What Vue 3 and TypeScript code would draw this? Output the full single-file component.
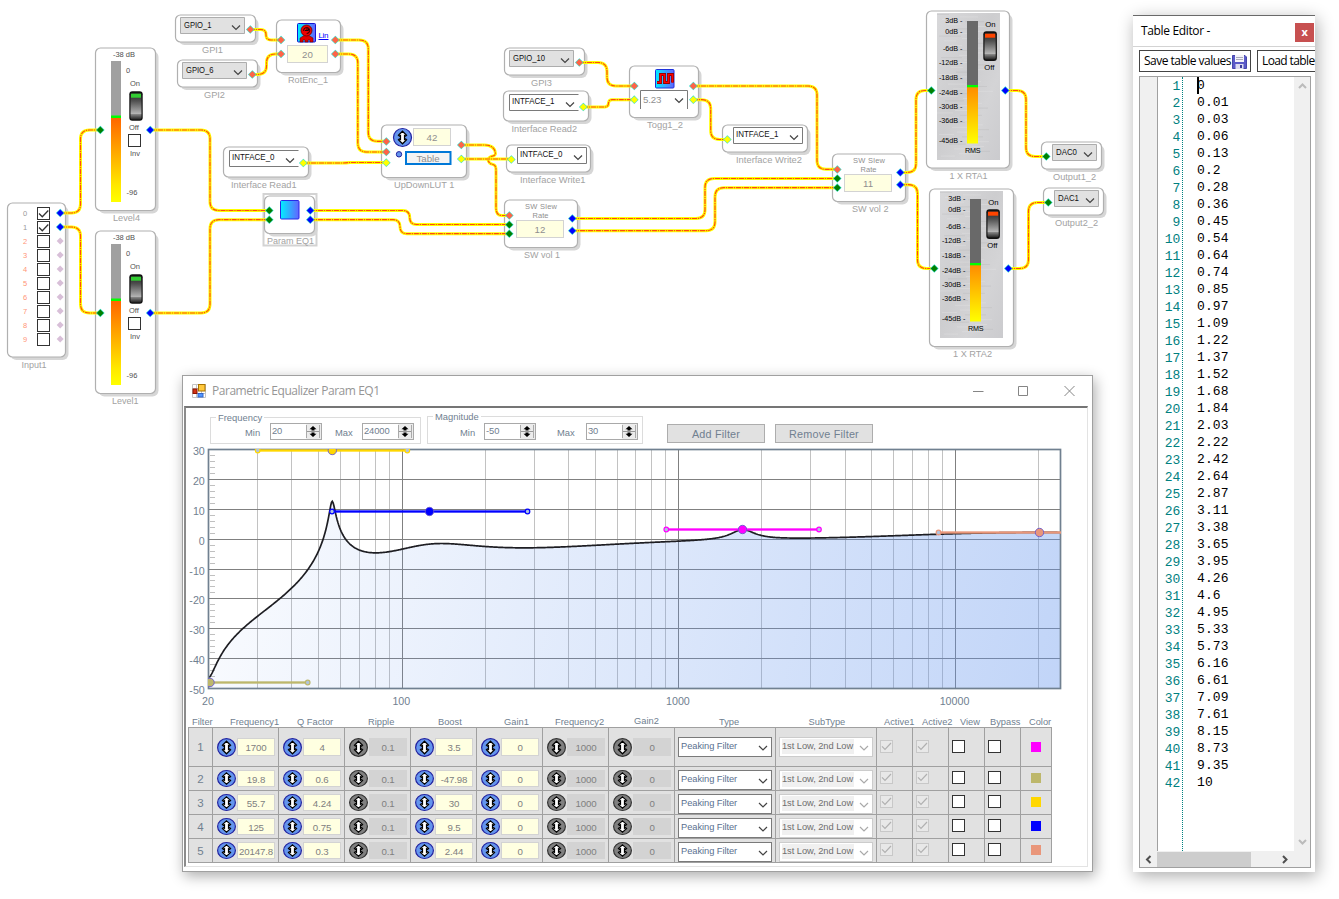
<script setup lang="ts">
type Pt = [number, number]
type Label = { x: number; y: number; t: string; w: number }
type Combo = { x: number; y: number; w: number; h: number; t: string; tw: number; grey?: boolean; open?: 'right' | 'bottom' }

const boxes: [number, number, number, number][] = [
  [95.5, 48, 60, 162.5], [95.5, 231, 60, 162.5], [7.5, 203, 58, 154],
  [175.5, 15, 80, 27], [177.5, 60, 80, 27], [276.5, 20, 64, 52.5],
  [223.5, 147, 85, 30], [264.5, 196, 50, 37.5], [381.5, 125, 85, 52.5],
  [504.5, 48, 80, 27], [503.5, 91, 85, 30], [506.5, 145, 84, 27],
  [504.5, 200, 73, 47.5], [629.5, 66, 69, 51.5], [722.5, 125, 85, 27],
  [832.5, 154, 73, 47.5], [926.5, 11, 83, 157], [929.5, 189, 84, 157.5],
  [1041.5, 142, 60, 27], [1043.5, 188, 60, 27],
]

const names: Label[] = [
  { x: 202, y: 53, t: 'GPI1', w: 21 }, { x: 204, y: 98, t: 'GPI2', w: 21 },
  { x: 288, y: 83, t: 'RotEnc_1', w: 40 }, { x: 231, y: 188, t: 'Interface Read1', w: 65.5 },
  { x: 113, y: 221, t: 'Level4', w: 27 }, { x: 21.5, y: 368, t: 'Input1', w: 25 },
  { x: 112, y: 404, t: 'Level1', w: 26.5 }, { x: 267, y: 244, t: 'Param EQ1', w: 47 },
  { x: 394, y: 188, t: 'UpDownLUT 1', w: 60.5 }, { x: 531, y: 86, t: 'GPI3', w: 21 },
  { x: 511.5, y: 132, t: 'Interface Read2', w: 65.5 }, { x: 520, y: 183, t: 'Interface Write1', w: 65.5 },
  { x: 524, y: 258, t: 'SW vol 1', w: 36 }, { x: 647, y: 128, t: 'Togg1_2', w: 36 },
  { x: 736, y: 163, t: 'Interface Write2', w: 66 }, { x: 852, y: 212, t: 'SW vol 2', w: 36.5 },
  { x: 949.5, y: 179, t: '1 X RTA1', w: 38 }, { x: 953, y: 357, t: '1 X RTA2', w: 39 },
  { x: 1053, y: 180, t: 'Output1_2', w: 43 }, { x: 1055, y: 226, t: 'Output2_2', w: 43 },
]

const combos: Combo[] = [
  { x: 180.5, y: 17.5, w: 64, h: 16, t: 'GPIO_1', tw: 27.5, grey: true },
  { x: 182.5, y: 62.5, w: 64, h: 16, t: 'GPIO_6', tw: 27.5, grey: true },
  { x: 509.5, y: 50.5, w: 64, h: 16, t: 'GPIO_10', tw: 32, grey: true },
  { x: 229.5, y: 150.5, w: 69, h: 16, t: 'INTFACE_0', tw: 42.5, open: 'right' },
  { x: 509.5, y: 94.5, w: 69, h: 16, t: 'INTFACE_1', tw: 42.5, open: 'right' },
  { x: 517.5, y: 147.5, w: 69, h: 16, t: 'INTFACE_0', tw: 42.5 },
  { x: 733.5, y: 127.5, w: 69, h: 16, t: 'INTFACE_1', tw: 42.5 },
  { x: 1052.5, y: 144.5, w: 44, h: 16, t: 'DAC0', tw: 21, grey: true },
  { x: 1054.5, y: 190.5, w: 44, h: 16, t: 'DAC1', tw: 21, grey: true },
]
const comboOutline = (c: Combo) =>
  c.open === 'right'
    ? `M${c.x + c.w} ${c.y}H${c.x}V${c.y + c.h}H${c.x + c.w}`
    : `M${c.x} ${c.y}h${c.w}v${c.h}h${-c.w}z`

const values = [
  { x: 287.5, y: 45.5, w: 40, t: '20' }, { x: 413.5, y: 128.5, w: 37, t: '42' },
  { x: 516.5, y: 220.5, w: 47, t: '12' }, { x: 844.5, y: 174.5, w: 47, t: '11' },
]

const ports: { kind: string; at: Pt[] }[] = [
  { kind: 'off', at: [2, 3, 4, 5, 6, 7, 8, 9].map((i): Pt => [60.2, 213 + i * 14]) },
  { kind: 'red', at: [[250.3, 29.5], [252.3, 74.5], [281, 40], [281, 54], [335.3, 40], [335.3, 54], [386.3, 141.5], [386.3, 152], [461.3, 145], [579.3, 62.5], [509.3, 215.5], [634.3, 86], [693.3, 86], [837.3, 169.5]] },
  { kind: 'yel', at: [[303.3, 163], [386.3, 162.7], [461.3, 159], [583.3, 107], [511.3, 159.5], [634.3, 99.7], [693.3, 99.7], [727.3, 139.5]] },
  { kind: 'grn', at: [[100.3, 130], [100.3, 313], [269.3, 210.5], [269.3, 219.7], [509.3, 224.7], [509.3, 233.7], [837.3, 178.5], [837.3, 187.7], [931.3, 90.5], [934.3, 268.5], [1046.3, 156.5], [1048.3, 202.5]] },
  { kind: 'blu', at: [[60.2, 213], [60.2, 227], [150.2, 130], [150.2, 313], [310.3, 210.5], [310.3, 219.7], [572.3, 218.5], [572.3, 230.7], [900.3, 172.5], [900.3, 184.7], [1005.3, 90.5], [1008.3, 268.5]] },
]

function route(x1: number, y1: number, m: number, x2: number, y2: number): string {
  const d = y2 - y1
  if (Math.abs(d) < 1) return `M${x1} ${y1}L${x2} ${y2}`
  const r = Math.min(9, Math.abs(d) / 2)
  const s = Math.sign(d)
  return `M${x1} ${y1}H${m - r}Q${m} ${y1} ${m} ${y1 + s * r}V${y2 - s * r}Q${m} ${y2} ${m + r} ${y2}H${x2}`
}
const wires: string[] = [
  route(60, 213, 80.5, 100, 130), route(60, 227, 80.5, 100, 313),
  route(150, 130, 210, 269, 210.5), route(150, 313, 210, 269, 219.7),
  route(250, 29.5, 266, 281, 40), route(252, 74.5, 266.5, 281, 54),
  'M303 163H342Q346 163 350 162.5H386',
  route(335, 40, 368.3, 386, 141.3), route(335, 54, 357.8, 386, 152),
  route(310, 210.5, 409.7, 509, 224.5), route(310, 219.7, 400, 509, 233.7),
  'M461 145H484Q495 145 495.5 154Q495 156 491 156.5Q488 158 488 160Q489 164 493 164.5Q496 165 496 170V208Q496 215.5 502 215.5H509',
  'M461 159H511',
  route(579, 62.5, 607, 634, 86), route(583, 107, 608.5, 634, 99.7),
  route(693, 86, 817, 837, 169.3), route(693, 99.7, 710.7, 727, 139.5),
  route(572, 218.5, 705, 837, 178.5), route(572, 230.7, 715, 837, 187.7),
  route(900, 172.5, 916, 931, 90.5), route(900, 184.7, 917.5, 934, 268.5),
  route(1005, 90.5, 1026, 1046, 156.5), route(1008, 268.5, 1028.5, 1048, 202.5),
]

const rtaScale: [string, number][] = [['3dB -', 20.5], ['0dB -', 31.5], ['-6dB -', 48], ['-12dB -', 62.5], ['-18dB -', 77.5], ['-24dB -', 92.5], ['-30dB -', 106.5], ['-36dB -', 120.5], ['-45dB -', 140.5]]
const streaks = Array.from({ length: 60 }, (_, i) => ({
  x: 937 + ((i * 23) % 41),
  y: 14 + i * 2.4,
  w: 12 + ((i * 17) % 11),
  light: i % 3 !== 0,
}))

/* Filter bank */
interface Filter { f: number; q: number; boost: number; color: string }
const filters: Filter[] = [
  { f: 1700, q: 4, boost: 3.5, color: '#ff00ff' },
  { f: 19.8, q: 0.6, boost: -47.98, color: '#bdb76b' },
  { f: 55.7, q: 4.24, boost: 30, color: '#ffd700' },
  { f: 125, q: 0.75, boost: 9.5, color: '#0000ff' },
  { f: 20147.8, q: 0.3, boost: 2.44, color: '#e9967a' },
]
const cells = (r: Filter) => [
  { v: r.f, on: true }, { v: r.q, on: true }, { v: 0.1, on: false }, { v: r.boost, on: true },
  { v: 0, on: true }, { v: 1000, on: false }, { v: 0, on: false },
]
const X0 = 208.7
const DEC = 276.6
const px = (f: number) => X0 + DEC * Math.log10(f / 20)
const py = (db: number) => 539.7 - 2.985 * db
function gain(f: number): number {
  return filters.reduce((sum, k) => {
    const a = Math.pow(10, k.boost / 40)
    const w = f / k.f
    const re = 1 - w * w
    return sum + 20 * Math.log10(Math.hypot(re, (w * a) / k.q) / Math.hypot(re, w / (a * k.q)))
  }, 0)
}
const trace: string[] = []
for (let x = X0; x <= 1060; x += 0.8) {
  trace.push(`${(x + 0.4).toFixed(1)} ${py(gain(20 * Math.pow(10, (x - X0) / DEC))).toFixed(2)}`)
}
const curve = 'M' + trace.join('L')
const area = `${curve}L1060 688L${X0} 688Z`
const vlines: { x: number; major: boolean }[] = []
for (const d of [10, 100, 1000, 10000]) {
  for (let k = 1; k < 10; k++) {
    const f = d * k
    if (f > 20 && f < 24000) vlines.push({ x: Math.floor(px(f)) + 0.5, major: k === 1 })
  }
}
const hlines = [20, 10, 0, -10, -20, -30, -40].map((d) => Math.round(py(d)) - 0.5)
const ticks: number[] = []
for (let d = 28; d > -50; d -= 2) if (d % 10) ticks.push(Math.round(py(d)) - 0.5)
const yAxis = [30, 20, 10, 0, -10, -20, -30, -40, -50]
const xAxis = [20, 100, 1000, 10000]
const handles = [
  { a: 208, m: 210, b: 307.7, y: 682.5, c: '#bdb76b' },
  { a: 257.7, m: 332.3, b: 407.3, y: 450.5, c: '#ffd700' },
  { a: 332, m: 429.5, b: 527.5, y: 511.5, c: '#0000ff' },
  { a: 666.3, m: 742.5, b: 819, y: 529.5, c: '#ff00ff' },
  { a: 938.5, m: 1039.5, b: 1072, y: 532.5, c: '#e9967a' },
]
const heads = ['Filter', 'Frequency1', 'Q Factor', 'Ripple', 'Boost', 'Gain1', 'Frequency2', 'Gain2', 'Type', 'SubType', 'Active1', 'Active2', 'View', 'Bypass', 'Color']
const ranges = [
  { title: 'Frequency', cls: 'freq', min: '20', max: '24000' },
  { title: 'Magnitude', cls: 'magn', min: '-50', max: '30' },
]

const table = ['0', '0.01', '0.03', '0.06', '0.13', '0.2', '0.28', '0.36', '0.45', '0.54', '0.64', '0.74', '0.85', '0.97', '1.09', '1.22', '1.37', '1.52', '1.68', '1.84', '2.03', '2.22', '2.42', '2.64', '2.87', '3.11', '3.38', '3.65', '3.95', '4.26', '4.6', '4.95', '5.33', '5.73', '6.16', '6.61', '7.09', '7.61', '8.15', '8.73', '9.35', '10']
const arrow = 'M0-6.3 4.1-2.3 3.2-1.4 2-2V2L3.2 1.4 4.1 2.3 0 6.3-4.1 2.3-3.2 1.4-2 2V-2L-3.2-1.4-4.1-2.3Z'
</script>

<template>
  <div class="desktop">
    <svg class="canvas" width="1339" height="899" viewBox="0 0 1339 899">
      <defs>
        <linearGradient id="level" x1="0" y1="0" x2="0" y2="1"><stop offset="0" stop-color="#ff6600" /><stop offset=".8" stop-color="#ffe800" /><stop offset="1" stop-color="#ffff00" /></linearGradient>
        <linearGradient id="rta" x1="0" y1="0" x2="0" y2="1"><stop offset="0" stop-color="#ff8c00" /><stop offset="1" stop-color="#ffff00" /></linearGradient>
        <linearGradient id="rocker" x1="0" y1="0" x2="0" y2="1"><stop offset="0" stop-color="#222" /><stop offset=".3" stop-color="#505050" /><stop offset=".78" stop-color="#b4b4b4" /><stop offset=".8" stop-color="#888" /><stop offset="1" stop-color="#222" /></linearGradient>
        <linearGradient id="tile" x1="0" y1="0" x2="1" y2="0"><stop offset="0" stop-color="#00f0ff" /><stop offset="1" stop-color="#6464ff" /></linearGradient>
        <linearGradient id="metal" x1="0" y1="0" x2="1" y2="1"><stop offset="0" stop-color="#d8d8da" /><stop offset=".45" stop-color="#cdcdcf" /><stop offset=".7" stop-color="#d4d4d6" /><stop offset="1" stop-color="#cbcbce" /></linearGradient>
      </defs>

      <rect class="sel" x="263.5" y="194" width="53" height="51.5" />
      <g v-for="(b, i) in boxes" :key="'b' + i">
        <rect class="shade" :x="b[0] + 3" :y="b[1] + 3" :width="b[2]" :height="b[3]" rx="6" />
        <rect class="box" :x="b[0]" :y="b[1]" :width="b[2]" :height="b[3]" rx="5" />
      </g>
      <text v-for="n in names" :key="n.t" class="name" :x="n.x" :y="n.y" :textLength="n.w" lengthAdjust="spacingAndGlyphs">{{ n.t }}</text>

      <g v-for="(w, i) in wires" :key="'w' + i">
        <path class="wire" :d="w" />
        <path class="core" :d="w" />
      </g>

      <g v-for="dy in [0, 183]" :key="'l' + dy" :transform="`translate(0 ${dy})`" class="tiny">
        <text x="113" y="57" textLength="22">-38 dB</text>
        <rect x="111" y="61" width="10" height="55" fill="#a0a0a0" />
        <rect x="111" y="118" width="10" height="84" fill="url(#level)" />
        <rect x="111" y="115.5" width="10" height="2.5" fill="#00ff00" />
        <text x="126" y="73">0</text>
        <text x="130" y="86">On</text>
        <rect x="129.3" y="91.3" width="13.4" height="29.4" rx="3" fill="#111" />
        <rect x="130.5" y="93" width="11" height="26.5" rx="2" fill="url(#rocker)" />
        <rect x="131" y="93.7" width="10" height="4" fill="#32cd32" />
        <text x="129" y="130">Off</text>
        <rect class="chk" x="128.5" y="134.5" width="12" height="12" />
        <text x="130" y="155.5">Inv</text>
        <text x="126.5" y="195">-96</text>
      </g>

      <g class="tiny">
        <g v-for="i in 10" :key="'i' + i">
          <text :x="23" :y="202 + i * 14" :class="i > 2 ? 'idle' : 'live'">{{ i - 1 }}</text>
          <rect class="chk" x="37.5" :y="193.5 + i * 14" width="12" height="12" />
          <path v-if="i < 3" class="tick" :d="`M39 ${199.5 + i * 14}l3.3 3.3 6-6.3`" />
        </g>
      </g>

      <g v-for="c in combos" :key="c.x">
        <rect :x="c.x" :y="c.y" :width="c.w" :height="c.h" :fill="c.grey ? '#e1e1e1' : '#fff'" />
        <path class="edge" :class="{ soft: c.grey }" :d="comboOutline(c)" />
        <text class="opt" :x="c.x + (c.grey ? 3.5 : 2.5)" :y="c.y + (c.grey ? 10.5 : 9.5)" :textLength="c.tw" lengthAdjust="spacingAndGlyphs">{{ c.t }}</text>
        <path class="chev" :d="`M${c.x + (c.open || !c.grey ? 56.5 : c.w - 12.5)} ${c.y + 8}l4 4 4-4`" />
      </g>
      <path class="edge" d="M640.5 109V90.5H687.5V109" />
      <text class="val left" x="643" y="103" textLength="18.5">5.23</text>
      <path class="chev" d="M675 98.5l4 4 4-4" />

      <g v-for="v in values" :key="v.t">
        <rect class="field" :x="v.x" :y="v.y" :width="v.w" height="17" />
        <text class="val" :x="v.x + v.w / 2" :y="v.y + 12.5">{{ v.t }}</text>
      </g>
      <g class="slew">
        <text x="525" y="209" textLength="32">SW Slew</text><text x="532.5" y="217.5" textLength="16">Rate</text>
        <text x="853" y="163" textLength="32">SW Slew</text><text x="860.5" y="171.5" textLength="16">Rate</text>
      </g>

      <rect x="297.5" y="23.5" width="18" height="18.5" rx="1" fill="url(#tile)" stroke="#1414d2" />
      <path d="M300 42v-4l4-2.5h5l4 2.5v4h-3v-2h-2v2h-3v-2h-2v2z" fill="#e00000" stroke="#500" stroke-width=".5" />
      <circle cx="306.5" cy="30.5" r="5.5" fill="#f00000" stroke="#600" stroke-width=".8" />
      <path d="M303.7 31a3 3 0 1 1 3 2.5M305 30.5h3.5v-1.5h-2.5" fill="none" stroke="#200" />
      <text class="lin" x="318.5" y="38" textLength="10">Lin</text><path d="M318.5 39.5h10" stroke="#00f" />
      <rect x="280.5" y="200.5" width="18.5" height="18.5" rx="1" fill="url(#tile)" stroke="#2828e6" />
      <rect x="655.5" y="69.5" width="18.5" height="18.5" rx="1" fill="url(#tile)" stroke="#1e32dc" />
      <path d="M657 82.5h3.5V74.500h4v8h4V74.500h4v8" fill="none" stroke="#700" stroke-width="2.8" />
      <path d="M657 82.5h3.5V74.500h4v8h4V74.500h4v8" fill="none" stroke="#f00" stroke-width="1.6" />

      <circle cx="402.5" cy="137.5" r="9" fill="#6495ed" stroke="#2323a0" stroke-width="1.2" />
      <path class="arrow" transform="translate(402.5 137.5)" :d="arrow" />
      <circle cx="399" cy="154.3" r="2.7" fill="#6495ed" stroke="#2323a0" />
      <rect x="406" y="152" width="44.5" height="12" fill="#f4f4f4" stroke="#0078d7" stroke-width="2" />
      <text class="val" x="428" y="162">Table</text>

      <g v-for="o in [[0, 0], [3, 178]]" :key="'r' + o[0]" :transform="`translate(${o[0]} ${o[1]})`" class="meter">
        <rect x="937" y="13" width="63" height="147" fill="url(#metal)" />
        <rect v-for="(s, i) in streaks" :key="i" :x="s.x" :y="s.y" :width="s.w" height="1" :fill="s.light ? '#fff' : '#999'" opacity=".17" />
        <text v-for="r in rtaScale" :key="r[0]" class="scale" x="962.5" :y="r[1] + 2.5">{{ r[0] }}</text>
        <rect x="967" y="21" width="11" height="64" fill="#696969" />
        <rect x="967" y="87" width="11" height="56.5" fill="url(#rta)" />
        <rect x="967" y="85" width="11" height="2.3" fill="#00ff00" />
        <text x="985.3" y="27" class="sw">On</text>
        <rect x="983.3" y="31.3" width="13.6" height="29.7" rx="3" fill="#111" />
        <rect x="984.5" y="33" width="11.2" height="26.5" rx="2" fill="url(#rocker)" />
        <rect x="985" y="33.7" width="10.2" height="4" fill="#ff4500" />
        <text x="984.3" y="70" class="sw">Off</text>
        <text x="965" y="153" textLength="15.5">RMS</text>
      </g>

      <g v-for="p in ports" :key="p.kind" :class="p.kind">
        <path v-for="(a, i) in p.at" :key="i" class="port" :d="`M${a[0]} ${a[1] - 3.5}l3.5 3.5-3.5 3.5-3.5-3.5z`" />
      </g>
    </svg>

    <section class="win eq">
      <header class="bar">
        <svg width="14" height="14" viewBox="0 0 14 14">
          <path d="M.5.5h13v13h-13zM.5 4.5h13M4.500.5v13M9.500.5v13M.5 9.5h13" fill="#fff" stroke="#c4c4c4" />
          <rect x="6.5" y=".5" width="6.5" height="6.5" fill="#ffc83c" stroke="#a87300" />
          <rect x="1" y="5" width="4" height="4.5" fill="#d23214" stroke="#8c1400" />
          <rect x="6" y="9.5" width="5" height="3.5" fill="#5096ff" stroke="#3264c8" />
        </svg>
        <span class="title">Parametric Equalizer Param EQ1</span>
        <svg class="sys" width="104" height="12" viewBox="0 0 104 12"><path d="M1 6.5h10.5M46.500 1.500h9v9h-9zM92.500 1l10 10M102.500 1l-10 10" fill="none" stroke="#858585" /></svg>
      </header>
      <div class="body">
        <div class="controls">
          <fieldset v-for="r in ranges" :key="r.title" :class="r.cls">
            <legend>{{ r.title }}</legend>
            <div class="range">
              <template v-for="[k, v] in [['Min', r.min], ['Max', r.max]]" :key="k">
                <label :class="k.toLowerCase()">{{ k }}</label>
                <div class="spin">
                  <span>{{ v }}</span>
                  <svg width="15" height="15" viewBox="0 0 15 15"><rect width="15" height="15" fill="#ececec" /><path d="M.5 1v13M13.500 1v13" stroke="#aaa" /><path d="M1 7.500h12" stroke="#999" /><path d="M7 2l3.500 3.200-2 0v1.300h-3v-1.300h-2zM7 13l3.500-3.200h-2v-1.300h-3v1.300h-2z" fill="#000" /></svg>
                </div>
              </template>
            </div>
          </fieldset>
          <button class="add">Add Filter</button>
          <button>Remove Filter</button>
        </div>

        <svg class="chart" width="900" height="265" viewBox="186 445 900 265">
          <defs>
            <linearGradient id="fill" gradientUnits="userSpaceOnUse" x1="209" y1="500" x2="1060" y2="700"><stop offset="0" stop-color="#6495ed" stop-opacity=".03" /><stop offset="1" stop-color="#6495ed" stop-opacity=".4" /></linearGradient>
            <clipPath id="plot"><rect x="208" y="449" width="853" height="240" /></clipPath>
          </defs>
          <path v-for="l in vlines" :key="l.x" :d="`M${l.x} 450V688`" :stroke="l.major ? '#808080' : '#c2c2c2'" />
          <path v-for="y in hlines" :key="y" :d="`M209 ${y}H1060`" stroke="#808080" />
          <path v-for="y in ticks" :key="'t' + y" :d="`M210 ${y}h5`" stroke="#c0c0c0" />
          <g clip-path="url(#plot)">
            <path :d="area" fill="url(#fill)" />
            <path :d="curve" class="curve" />
          </g>
          <rect x="208.5" y="449.5" width="852" height="239" class="frame" />
          <g clip-path="url(#plot)">
            <g v-for="h in handles" :key="h.c" :stroke="h.c">
              <path :d="`M${h.a} ${h.y}H${h.b}`" stroke-width="3" opacity=".55" />
              <path :d="`M${h.a} ${h.y}H${h.b}`" stroke-width="1.3" />
              <circle :cx="h.a" :cy="h.y" r="2.3" fill="#b0c4de" stroke-width="1.2" />
              <circle :cx="h.b" :cy="h.y" r="2.3" fill="#b0c4de" stroke-width="1.2" />
              <circle :cx="h.m" :cy="h.y" r="4.2" :fill="h.c" stroke="#6a5acd" stroke-width=".9" />
            </g>
          </g>
          <text v-for="v in yAxis" :key="'y' + v" class="axis end" x="204.8" :y="py(v) + (v === 30 ? 4.8 : 5)">{{ v }}</text>
          <text v-for="v in xAxis" :key="'x' + v" class="axis mid" :x="px(v) - .7" y="705">{{ v }}</text>
        </svg>

        <div class="heads"><span v-for="h in heads" :key="h" :class="{ up: h === 'Gain2' }">{{ h }}</span></div>
        <div class="grid">
          <div v-for="(f, i) in filters" :key="f.f" class="row" :class="{ first: i === 0 }">
            <div class="num">{{ i + 1 }}</div>
            <div v-for="(c, j) in cells(f)" :key="j" class="knob" :class="{ dis: !c.on }">
              <svg width="19" :height="i ? 17 : 19" viewBox="-9.5 -9.5 19 19" preserveAspectRatio="none"><circle r="8.9" :fill="c.on ? '#6495ed' : '#808080'" :stroke="c.on ? '#2323a0' : '#333'" stroke-width="1.2" /><path class="arrow" :d="arrow" /></svg>
              <span>{{ c.v }}</span>
            </div>
            <div class="pick"><div class="select"><span>Peaking Filter</span><svg width="10" height="6" viewBox="0 0 10 6"><path d="M1 1l4 4 4-4" /></svg></div></div>
            <div class="pick"><div class="select dim"><span>1st Low, 2nd Low</span><svg width="10" height="6" viewBox="0 0 10 6"><path d="M1 1l4 4 4-4" /></svg></div></div>
            <div v-for="k in 4" :key="k" class="tickcell"><svg width="13" height="13" viewBox="0 0 13 13" :class="{ faded: k < 3 }"><rect x=".5" y=".5" width="12" height="12" /><path v-if="k < 3" d="M2 6.300l3 3 6-6.300" /></svg></div>
            <div class="swatch"><i :style="{ background: f.color }"></i></div>
          </div>
        </div>
      </div>
    </section>

    <section class="win editor">
      <header class="ehead"><span>Table Editor -</span><b>x</b></header>
      <div class="tools">
        <button class="save">Save table values<svg width="15" height="14" viewBox="0 0 15 14"><path d="M.5.5h12.500l1.500 1.500v11.500H.5z" fill="#5a5ac8" stroke="#4646aa" /><rect x="3" y="0" width="9" height="7" fill="#f4f4fa" /><path d="M4 2.500h7M4 4.500h7" stroke="#aab" /><rect x="3.5" y="9" width="8" height="5" fill="#dcdcf0" /><rect x="8" y="10" width="2" height="3" fill="#3c3c9b" /></svg></button>
        <button class="load">Load table</button>
      </div>
      <div class="edit">
        <div class="main">
          <div class="margin"></div>
          <ol class="nums"><li v-for="(_, i) in table" :key="i">{{ i + 1 }}</li></ol>
          <ol class="vals"><li v-for="(v, i) in table" :key="i">{{ v }}</li></ol>
          <div class="vbar">
            <svg width="9" height="6" viewBox="0 0 9 6"><path d="M1 5l3.500-3.500L8 5" /></svg>
            <svg width="9" height="6" viewBox="0 0 9 6"><path d="M1 1l3.500 3.500L8 1" /></svg>
          </div>
        </div>
        <div class="hbar">
          <svg width="17" height="15" viewBox="0 0 17 15"><path d="M10.500 4l-3.500 3.500 3.500 3.500" /></svg>
          <i></i>
          <svg class="rt" width="17" height="15" viewBox="0 0 17 15"><path d="M7 4l3.500 3.500-3.500 3.500" /></svg>
        </div>
      </div>
    </section>
  </div>
</template>

<style>
html, body { margin: 0; background: #fff; overflow: hidden; }
</style>

<style scoped>
.desktop { position: relative; width: 1339px; height: 899px; overflow: hidden; background: #fff; font-family: "Liberation Sans", Arial, sans-serif; }
.canvas { position: absolute; left: 0; top: 0; display: block; }
.sel { fill: none; stroke: #d3d3d3; stroke-width: 2; }
.shade { fill: #d6d6d6; }
.box { fill: #fff; stroke: #b0b0b0; stroke-width: 1.2; }
.name { font-size: 9.7px; fill: #a2a2a2; }
.wire { fill: none; stroke: #ffff00; stroke-width: 3; }
.core { fill: none; stroke: #ff4a10; stroke-width: 1.2; stroke-dasharray: 5 .8 1.4 .8; }
.tiny { font-size: 7.5px; fill: #505050; }
.live { fill: #999; }
.idle { fill: #ff9678; }
.chk { fill: #fff; stroke: #333; }
.tick { fill: none; stroke: #333; stroke-width: 1.3; }
.edge { fill: none; stroke: #7a7a7a; }
.edge.soft { stroke: #adadad; }
.opt { font-size: 8.3px; fill: #111; }
.chev { fill: none; stroke: #444; stroke-width: 1.2; }
.field { fill: #ffffe1; stroke: #d3d3d3; }
.val { font-size: 9.7px; fill: #8f8f8f; text-anchor: middle; }
.val.left { text-anchor: start; }
.slew { font-size: 7.5px; fill: #909090; }
.lin { font-size: 8px; fill: #00f; }
.arrow { fill: #fff; stroke: #000; stroke-width: 1.2; stroke-linejoin: miter; }
.meter { font-size: 7.2px; fill: #000; }
.meter .sw { font-size: 7.7px; }
.scale { text-anchor: end; }
.port { stroke: #40e0d0; stroke-width: 1.2; paint-order: stroke; }
.off .port { fill: #d8bfd8; stroke: none; }
.red .port { fill: #ff6347; }
.yel .port { fill: #ffff00; }
.grn .port { fill: #008000; }
.blu .port { fill: #0000ff; }

.win { position: absolute; box-sizing: border-box; background: #fff; }
.eq { left: 182px; top: 375px; width: 911px; height: 497px; border: 1px solid #a0a0a0; box-shadow: 2px 4px 13px rgba(0, 0, 0, .33); display: flex; flex-direction: column; }
.bar { height: 30px; display: flex; align-items: center; padding: 0 16px 0 9px; flex: none; }
.title { margin-left: 6px; font: 12px/16px "Open Sans", "Noto Sans", sans-serif; color: #969696; letter-spacing: -.46px; }
.sys { margin-left: auto; }
.body { flex: 1; margin: 0 4px 4px 1px; border: solid #e3e3e3; border-width: 2px 1px 1px 2px; border-top-color: #757575; border-left-color: #8c8c8c; }
.controls { height: 37px; display: flex; padding-left: 24px; align-items: flex-start; }
fieldset { margin: 0; padding: 0; min-width: 0; box-sizing: border-box; border: 1px solid #dcdcdc; font-size: 9.4px; color: #708090; }
legend { margin-left: 5px; padding: 0 2px; height: 11px; line-height: 12px; }
.freq { width: 211px; height: 32px; margin-top: 4px; }
.magn { width: 216px; height: 33px; margin: 3px 24px 0 6px; }
.range { display: flex; line-height: 20px; }
.freq .min { margin-left: 34px; width: 25px; }
.freq .max { margin-left: 13px; width: 27px; }
.magn .range { padding-top: 1px; }
.magn .min { margin-left: 32px; width: 24px; }
.magn .max { margin-left: 21px; width: 29px; }
.spin { box-sizing: border-box; width: 52px; height: 17px; border: 1px solid #a9a9a9; display: flex; justify-content: space-between; line-height: 14px; padding-left: 1px; letter-spacing: -.1px; }
button { font-family: "Liberation Sans", Arial, sans-serif; font-size: 10.8px; letter-spacing: .2px; color: #708090; background: #e1e1e1; border: 1px solid #adadad; box-sizing: border-box; width: 98px; height: 19px; margin: 16px 0 0; padding: 1px 0 0; line-height: 16px; }
.add { margin-right: 10px; }
.chart { display: block; }
.curve { fill: none; stroke: #1e1e23; stroke-width: 1.7; }
.frame { fill: none; stroke: #708090; stroke-width: 1.7; }
.axis { font-size: 10.7px; fill: #708090; }
.end { text-anchor: end; }
.mid { text-anchor: middle; }
.heads { display: grid; grid-template-columns: 38px 67px 71px 70px 66px 51px 79px 85px 89.6px 75.4px 38px 38px 30px 39px auto; padding-left: 6px; height: 17px; box-sizing: border-box; padding-top: 6px; font-size: 9.3px; line-height: 12px; color: #708090; white-space: nowrap; }
.heads .up { line-height: 10px; }
.grid { margin-left: 2px; width: 864px; box-sizing: border-box; border: solid #a0a0a0; border-width: 1px 0 0 1px; background: #e1e1e1; }
.row { height: 24px; display: grid; grid-template-columns: 24px 66px 66px 66px 66px 66px 66px 66px 101px 101px 36px 36px 36px 36px 31px; }
.row.first { height: 39px; }
.row > div { box-sizing: border-box; border: solid #a0a0a0; border-width: 0 1px 1px 0; display: flex; align-items: center; overflow: hidden; }
.num { justify-content: center; font-size: 11.5px; color: #708090; }
.knob svg { margin-left: 4px; flex: none; }
.knob span { margin: 0 0 1px 1px; width: 38px; height: 17px; box-sizing: border-box; border: 1px solid #d3d3d3; background: #ffffe1; text-align: center; font-size: 9.7px; line-height: 17px; color: #808080; letter-spacing: -.15px; white-space: nowrap; }
.first .knob span { height: 18px; line-height: 17px; margin-bottom: 0; }
.knob.dis span { background: #d3d3d3; }
.pick { align-items: flex-start !important; padding: 3px 0 0 3px; }
.first .pick { padding-top: 9px; }
.select { box-sizing: border-box; width: 94px; height: 20px; flex: none; border: 1px solid #7a7a7a; background: #fff; display: flex; justify-content: space-between; align-items: flex-end; padding: 0 3px 5px 2px; }
.select span { align-self: flex-start; font-size: 9.3px; line-height: 17px; color: #5a7090; white-space: nowrap; letter-spacing: -.05px; }
.select svg { fill: none; stroke: #444; stroke-width: 1.2; flex: none; }
.select.dim { border-color: #ccc; }
.select.dim span { width: 72px; height: 15px; margin-top: 1px; line-height: 15px; background: #f0f0f0; color: #6e6e6e; }
.select.dim svg { stroke: #aaa; }
.tickcell { padding: 0 0 2px 3px; }
.tickcell svg { fill: #fff; stroke: #333; }
.tickcell svg.faded { fill: none; stroke: #b0b0b0; stroke-width: 1.2; }
.tickcell svg.faded rect { fill: #e8e8e8; stroke: #c8c8c8; stroke-width: 1; }
.swatch { padding: 0 0 1px 10px; }
.swatch i { width: 10px; height: 10px; }

.editor { left: 1133px; top: 15px; width: 182px; height: 857px; border-top: 1px solid #696969; box-shadow: 2px 4px 16px rgba(0, 0, 0, .33); font-family: "Open Sans", "Noto Sans", sans-serif; display: flex; flex-direction: column; }
.ehead { height: 31px; box-sizing: border-box; border-bottom: 1px solid #d3d3d3; display: flex; justify-content: space-between; font-size: 12px; line-height: 30px; padding: 0 1px 0 8px; letter-spacing: -.35px; color: #000; }
.ehead b { width: 19px; height: 19px; margin-top: 7px; background: #c75050; color: #fff; text-align: center; font-size: 11px; line-height: 17px; }
.tools { display: flex; padding: 3px 0 4px 6px; }
.tools button { margin: 0; height: 22px; flex: none; background: #fff; border: 1px solid #444; color: #000; font: 12px/18px "Open Sans", "Noto Sans", sans-serif; letter-spacing: -.52px; padding: 0 0 0 4px; display: flex; align-items: center; white-space: nowrap; text-align: left; }
.tools .save { width: 112px; margin-right: 6px; }
.save svg { margin: 2px 0 0 1px; flex: none; }
.tools .load { width: 58px; padding-left: 4px; border-right: 0; letter-spacing: -.6px; }
.edit { margin: 0 4px 4px 6px; flex: 1; min-height: 0; border: 1px solid #a0a0a0; display: flex; flex-direction: column; }
.main { flex: 1; min-height: 0; display: flex; overflow: hidden; }
.margin { width: 17px; background: #f0f0f0; border-right: 1px solid #a0a0a0; }
ol { list-style: none; margin: 0; padding: 0; font: 13px/17px "Liberation Mono", "Courier New", monospace; }
.nums { width: 22px; padding: 1px 2px 0 0; text-align: right; color: #008080; border-right: 1px dotted #008080; letter-spacing: -.2px; }
.vals { flex: 1; color: #000; padding-left: 14px; letter-spacing: .1px; }
.vals li:first-child { box-shadow: inset 2px 0 #000; }
.vbar { width: 16px; background: #f0f0f0; display: flex; flex-direction: column; justify-content: space-between; align-items: center; padding: 6px 0; box-sizing: border-box; }
.vbar svg { fill: none; stroke: #bbb; stroke-width: 2; }
.hbar { height: 16px; background: #f0f0f0; display: flex; align-items: center; }
.hbar i { width: 94px; height: 15px; background: #cdcdcd; }
.hbar svg { fill: none; stroke: #505050; stroke-width: 2; }
.hbar .rt { margin-left: 25px; }
</style>
